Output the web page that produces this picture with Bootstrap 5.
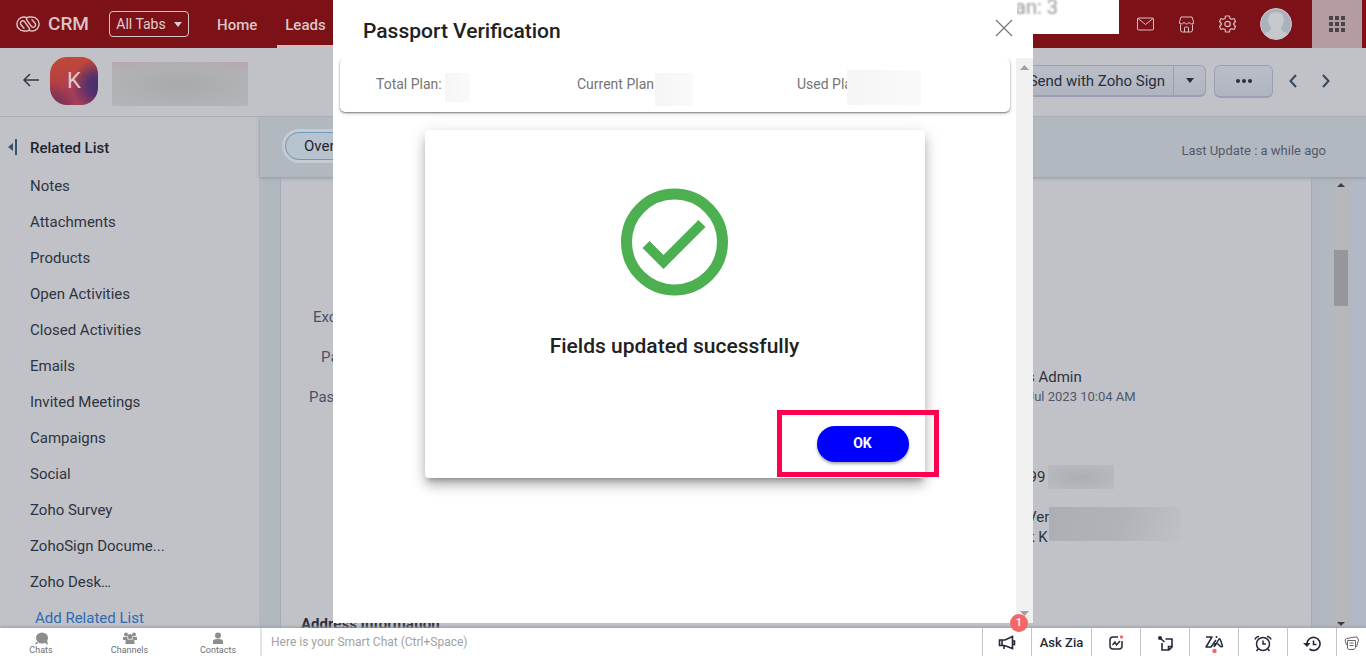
<!DOCTYPE html>
<html lang="en">
<head>
<meta charset="utf-8">
<meta name="viewport" content="width=device-width, initial-scale=1">
<title>Passport Verification - CRM</title>
<link href="https://cdn.jsdelivr.net/npm/bootstrap@5.3.0/dist/css/bootstrap.min.css" rel="stylesheet">
<script src="https://cdn.jsdelivr.net/npm/bootstrap@5.3.0/dist/js/bootstrap.bundle.min.js" defer></script>
<style>
body{font-family:Roboto,"Liberation Sans",sans-serif;font-size:15px;line-height:20px;color:#2e3440;background:#c1c2c8;height:100vh;overflow:hidden}
a{text-decoration:none;color:inherit}
svg{display:block;flex:none}
button{font:inherit}
.topbar{height:48px;background:#7c1117;color:#d9c5c8;flex:none}
.brand{font-size:19px;font-weight:500;gap:8px;padding-left:16px;width:109px}
.alltabs{width:80px;height:26px;border:1px solid #d9c5c8;border-radius:4px;background:none;color:#e0cdd0;font-size:14px;padding:0}
.mainnav{margin-left:28px;gap:20px}
.toplink{height:47px;line-height:48px;font-size:15px;font-weight:500}
.toplink.current{border-bottom:3px solid #d3bcc0;padding:0 8px}
.topicons{gap:24px;color:#d9bfc2;margin-right:20px}
.avatar{width:32px;height:32px}
.apps{width:50px;height:48px;background:#b59ca2;margin-right:4px}
.recordbar{height:69px;border-bottom:1px solid #abadb4;flex:none;padding:0 36px 2px 22px}
.face{width:48px;height:48px;border-radius:17px;margin:0 14px 0 10px;color:#e2c9cd;font-size:22px;background:radial-gradient(circle at 100% 60%,#44306a 0,#54306c 18%,transparent 48%),radial-gradient(circle at 0 110%,#5a2c5c 0,transparent 40%),radial-gradient(circle at 55% 85%,#a83e5c 0,transparent 50%),linear-gradient(#c14738,#ab3b4c)}
.mask-name{width:136px;height:44px;margin-top:6px;background:radial-gradient(ellipse,#a8a9ad 0,#afb0b4 50%,transparent 100%),linear-gradient(#b9a6ab,#b4b5b9 30%)}
.greybtn{height:32px;border:1px solid #9b9fb6;border-bottom-width:2px;background:linear-gradient(#b9bec8,#afb4c0);color:#27303c}
.greybtn.drop{width:32px}
.greybtn.more{width:59px;height:33px;border-radius:6px}
.pager{gap:25px;margin-left:16px}
.sidebar{width:260px;border-right:1px solid #b5bac2;padding:21px 0 0 30px;flex:none}
.sidehead{font-weight:500;color:#20252e;margin-bottom:18px}
.fold{left:8px;top:22px}
.sidelist{display:flex;flex-direction:column;gap:16px}
.addlist{color:#2e6bb4;padding-left:5px}
.work{background:#b2b8c0;min-width:0}
.tabsbar{height:60px;padding:0 40px 2px 22px;box-shadow:0 1px 4px #8f96a3;flex:none;z-index:1;background:#b2b8c0}
.pill{height:34px;border:3px solid #c6cbd2;border-radius:17px;width:200px}
.pill button{width:100%;height:28px;border:1px solid #6d9bbd;border-radius:14px;background:#b8c3d0;color:#1f252e;text-align:left;padding:0 18px}
.updated{font-size:13px;color:#535a6e;padding-top:10px}
.pane{min-height:0}
.sheet{background:#c1c2c8;margin-left:20px;border-left:1px solid #a3adb9;border-right:1px solid #a3adb9}
.labels{color:#4b5165;padding:130px 0 0 28px;gap:20px}
.values{width:284px;padding-top:190px}
.datetime{font-size:13px;color:#50576a}
.phone{margin-top:60px}
.street{margin-top:18px}
.cover-phone{width:66px;height:24px;margin:-2px 0 0 3px;background:radial-gradient(ellipse,#adaeb2,#b8b9bd 80%)}
.cover-street{width:132px;height:34px;background:linear-gradient(110deg,#adaeb3,#b2b3b8 55%,#c0c1c6)}
.scroller{width:54px;padding-left:20px;background:linear-gradient(90deg,#b1b7c0 0,#b2b8bf 18px,#b6b8bb 22px,#b6b7bb 36px,#b2b8c6 39px)}
.track{width:18px;padding:5px 0 0}
.thumb{width:14px;height:56px;background:#96979c;margin-top:63px}
.secthead{font-weight:700;color:#2a2f3a;left:20px;top:437px}
.chatbar{height:28px;background:#fff;flex:none;z-index:30;position:relative;box-shadow:0 -1px 3px #9b9ca1}
.contacts{width:262px;border-right:2px solid #e4e4e6;padding:4px 20px 0 19px;font-size:9px;line-height:11px;color:#707070}
.contacts a{width:44px}
.smart{border:0;outline:0;background:none;font-size:12px;padding:0 9px;min-width:0}
.smart::placeholder{color:#a2a2a2;opacity:1}
.tool{width:49px;border:0;border-left:1px solid #c4c5cc;background:none;color:#252a38;padding:2px 0 0}
.tool.zia-ask{width:60px;font-size:13px;font-weight:500}
.tool.last{width:30px;color:#666}
.count{width:18px;height:18px;right:338px;top:-14px;background:#f56767;color:#fff;font-size:11px;font-weight:500;line-height:18px;text-align:center;border-radius:50%;z-index:2}
.veil{inset:0 0 33px;z-index:20;pointer-events:none}
.dialogbox{width:700px;background:#fff;color:#212121;pointer-events:auto}
.dialoghead{height:58px;padding:0 20px 2px 30px;flex:none}
.dialoghead h1{font-size:21px;line-height:24px;font-weight:500;margin:6px 0 0}
.closer{border:0;background:none;padding:0;color:#777}
.plans{margin:0 6px 0 7px;height:54px;border-radius:5px;box-shadow:0 1px 2px #777,0 3px 5px #0001;clip-path:inset(0 -5px -8px);display:grid;grid-template-columns:201px 220px 1fr;padding:0 0 2px 36px;color:#757575;font-size:14px}
.plans>div{position:relative;display:flex;align-items:center}
.plans i{position:absolute;background:linear-gradient(90deg,#f5f5f5,#fafafa)}
.cover-total{left:69px;top:15px;width:25px;height:29px}
.cover-current{left:78px;top:15px;width:38px;height:33px}
.cover-used{left:50px;top:12px;width:74px;height:35px}
.rail{width:17px;background:#f0f0f0;color:#a0a0a0;padding:7px 4px}
.done{width:500px;height:348px;margin:18px auto 0;border-radius:4px;box-shadow:0 5px 5px -3px #0004,0 8px 12px #0003,0 3px 18px #0002;padding-top:58px}
.done h2{font-size:21px;line-height:24px;font-weight:500;margin:38px 0 0}
.okbtn{display:block;width:92px;height:36px;border:0;border-radius:18px;background:#00f;color:#fff;font-size:14px;font-weight:700;box-shadow:0 2px 3px #0005;padding:0 0 2px}
.okwrap{margin:68px 16px 0 0}
.marker{inset:-16px -30px -15px -40px;border:5px solid #ff0050;pointer-events:none}
.scrap{left:684px;top:0;width:102px;height:34px;background:#fff;color:#999;font-size:20px;line-height:14px;overflow:hidden}
.scrap span{filter:blur(1px);display:block;margin-left:-2px}
</style>
</head>
<body class="d-flex flex-column position-relative">
<header class="topbar d-flex align-items-center">
  <a href="#" class="brand d-flex align-items-center"><svg width="24" height="16" viewBox="0 0 24 16" fill="none" stroke="currentColor" stroke-width="1.400" stroke-linecap="round"><path id="loop" d="M11 1.700A7 7 0 1 0 8 15h3q3.500-.5 2.200-3L8.500 5.500Q7 4 5.300 5.300 3.800 7 5 8.800L8 12.300"/><use href="#loop" transform="rotate(180 12 8)"/></svg>CRM</a>
  <button class="alltabs d-flex align-items-center justify-content-center gap-2">All Tabs <svg width="8" height="5"><path d="M0 0h8L4 5z" fill="currentColor"/></svg></button>
  <nav class="mainnav d-flex"><a href="#" class="toplink">Home</a><a href="#" class="toplink current">Leads</a></nav>
  <div class="topicons ms-auto d-flex align-items-center">
    <svg width="17" height="14" viewBox="0 0 17 14" fill="none" stroke="currentColor"><rect x=".5" y="1" width="16" height="12" rx="1"/><path d="M1 1.500l7.500 6 7.500-6"/></svg>
    <svg width="17" height="17" viewBox="0 0 17 17" fill="none" stroke="currentColor"><path d="M3 1h11l1.500 4.500q.5 2.500-1.500 3M3 1L1.500 5.500Q1 8 3 8.500M2.500 9v5q0 2 2 2h8q2 0 2-2V9M6.500 16v-4q0-1 1-1h2q1 0 1 1v4M1.500 6c0 2.500 4.500 2.500 4.500 0 0 2.500 5 2.500 5 0 0 2.500 4.500 2.500 4.500 0"/></svg>
    <svg width="17" height="18" viewBox="0 0 17 18" fill="none" stroke="currentColor" stroke-width="1.200" stroke-linejoin="round"><path d="M6.500 1h4l.5 2.500 1.500.8 2.500-.8 1.500 3-1.800 2v1l1.800 2-1.500 3-2.500-.8-1.500.8-.5 2.500h-4L6 14.500l-1.500-.8-2.500.8-1.500-3 1.800-2v-1l-1.800-2 1.500-3 2.500.8L6 3.500z"/><circle cx="8.500" cy="9" r="2.700"/></svg>
    <svg class="avatar" viewBox="0 0 32 32"><defs><clipPath id="disc"><circle cx="16" cy="16" r="15"/></clipPath></defs><circle cx="16" cy="16" r="15.500" fill="#aab2bc" stroke="#c9c9cf"/><path clip-path="url(#disc)" d="M16 4c10 0 9 12 5 16 0 4 6 4 9 7v5H2v-5c3-3 9-3 9-7C7 16 6 4 16 4z" fill="#c6c8ce"/></svg>
  </div>
  <button class="apps border-0 d-flex align-items-center justify-content-center" aria-label="Apps"><svg width="16" height="16" fill="#484448"><path d="M0 0h4v4H0zM6 0h4v4H6zM12 0h4v4h-4zM0 6h4v4H0zM6 6h4v4H6zM12 6h4v4h-4zM0 12h4v4H0zM6 12h4v4H6zM12 12h4v4h-4z"/></svg></button>
</header>
<section class="recordbar d-flex align-items-center">
  <svg width="18" height="14" viewBox="0 0 18 14" fill="none" stroke="#303847" stroke-width="1.500"><path d="M17 6H2M8 0L2 6l6 6"/></svg>
  <div class="face d-flex align-items-center justify-content-center">K</div>
  <div class="mask-name"></div>
  <div class="ms-auto d-flex align-items-center">
    <div class="d-flex"><button class="greybtn rounded-start px-2">Send with Zoho Sign</button><button class="greybtn drop rounded-end border-start-0 d-flex align-items-center justify-content-center" aria-label="More senders"><svg width="8" height="5"><path d="M0 0h8L4 5z" fill="currentColor"/></svg></button></div>
    <button class="greybtn more ms-2 d-flex align-items-center justify-content-center" aria-label="More"><svg width="16" height="4" fill="currentColor"><circle cx="2" cy="2" r="2"/><circle cx="8" cy="2" r="2"/><circle cx="14" cy="2" r="2"/></svg></button>
    <div class="pager d-flex"><svg width="8" height="14" fill="none" stroke="#34495c" stroke-width="2"><path d="M7 1L1.500 7 7 13"/></svg><svg width="8" height="14" fill="none" stroke="#34495c" stroke-width="2"><path d="M1 1l5.500 6L1 13"/></svg></div>
  </div>
</section>
<main class="d-flex flex-grow-1 overflow-hidden">
  <aside class="sidebar position-relative">
    <svg class="fold position-absolute" width="10" height="16"><path d="M0 8l5-4v8z" fill="#34556a"/><path d="M8 0v16" stroke="#34556a" stroke-width="2"/></svg>
    <div class="sidehead">Related List</div>
    <nav class="sidelist"><a href="#">Notes</a><a href="#">Attachments</a><a href="#">Products</a><a href="#">Open Activities</a><a href="#">Closed Activities</a><a href="#">Emails</a><a href="#">Invited Meetings</a><a href="#">Campaigns</a><a href="#">Social</a><a href="#">Zoho Survey</a><a href="#">ZohoSign Docume...</a><a href="#">Zoho Desk…</a><a href="#" class="addlist">Add Related List</a></nav>
  </aside>
  <section class="work flex-grow-1 d-flex flex-column">
    <div class="tabsbar d-flex align-items-center"><div class="pill"><button>Overview</button></div><span class="updated ms-auto">Last Update : a while ago</span></div>
    <div class="pane d-flex flex-grow-1">
      <div class="sheet flex-grow-1 d-flex justify-content-between position-relative overflow-hidden">
        <div class="labels d-flex flex-column"><span class="ps-1">Exc</span><span class="ps-2 ms-1">Pa</span><span>Pass</span></div>
        <b class="secthead position-absolute">Address Information</b>
        <div class="values">
          <div>s Admin</div><div class="datetime">Jul 2023 10:04 AM</div>
          <div class="phone d-flex">&#8202;99<div class="cover-phone"></div></div>
          <div class="street d-flex"><div>Ver<br>k K</div><div class="cover-street"></div></div>
        </div>
      </div>
      <div class="scroller"><div class="track d-flex flex-column align-items-center h-100"><svg width="8" height="5"><path d="M0 5l4-4 4 4z" fill="#3c3f45"/></svg><div class="thumb"></div><svg class="mt-auto" width="8" height="6"><path d="M0 0l4 4 4-4z" fill="#3c3f45"/></svg></div></div>
    </div>
  </section>
</main>
<div class="veil position-absolute d-flex justify-content-center">
  <div class="dialogbox position-relative d-flex flex-column" role="dialog" aria-label="Passport Verification">
    <div class="dialoghead d-flex align-items-center justify-content-between"><h1>Passport Verification</h1><button class="closer" aria-label="Close"><svg width="18" height="18" stroke="currentColor" stroke-width="1.200"><path d="M1 1l16 16M17 1L1 17"/></svg></button></div>
    <div class="d-flex flex-grow-1">
      <div class="flex-grow-1">
        <div class="plans"><div>Total Plan:<i class="cover-total"></i></div><div>Current Plan<i class="cover-current"></i></div><div>Used Plan<i class="cover-used"></i></div></div>
        <div class="done bg-white text-center">
          <svg class="mx-auto" width="108" height="108" viewBox="0 0 108 108"><circle cx="53.500" cy="54" r="48" fill="none" stroke="#4caf50" stroke-width="11"/><path d="M21.500 60l7-7 14 14 35-35 7 7-42 42z" fill="#4caf50"/></svg>
          <h2>Fields updated sucessfully</h2>
          <div class="okwrap d-flex justify-content-end"><div class="position-relative"><button class="okbtn">OK</button><div class="marker position-absolute"></div></div></div>
        </div>
      </div>
      <div class="rail d-flex flex-column justify-content-between"><svg width="9" height="5"><path d="M0 5l4.500-5L9 5z" fill="currentColor"/></svg><svg width="9" height="5"><path d="M0 0l4.500 5L9 0z" fill="currentColor"/></svg></div>
    </div>
    <div class="scrap position-absolute"><span>an: 3</span></div>
  </div>
</div>
<footer class="chatbar d-flex">
  <nav class="contacts d-flex justify-content-between text-center">
    <a href="#"><svg class="mx-auto" width="14" height="13" fill="#8d8d8d"><ellipse cx="8" cy="6" rx="6" ry="5.500"/><path d="M1 3c-2 4 0 7 4 8l-4 1.500L2 10C0 8 0 5 1 3zM10 10l4 3-1-5z"/></svg>Chats</a>
    <a href="#"><svg class="mx-auto" width="14" height="13" fill="#8d8d8d"><circle cx="3" cy="2.500" r="2"/><circle cx="11" cy="2.500" r="2"/><circle cx="7" cy="4.500" r="2.500"/><path d="M0 8V5h4l1 3zM14 8V5h-4L9 8zM2.500 12V9q0-1.500 2-1.500h5q2 0 2 1.500v3z"/></svg>Channels</a>
    <a href="#"><svg class="mx-auto" width="12" height="13" fill="#8d8d8d"><circle cx="6" cy="3.500" r="3"/><path d="M1 12V9q0-2 5-2t5 2v3z"/></svg>Contacts</a>
  </nav>
  <input class="smart flex-grow-1" aria-label="Smart Chat" placeholder="Here is your Smart Chat (Ctrl+Space)">
  <span class="count position-absolute">1</span>
  <button class="tool d-flex align-items-center justify-content-center" aria-label="Announcements"><svg width="18" height="16" viewBox="0 0 18 16" fill="none" stroke="currentColor" stroke-width="1.600"><path d="M1.500 5v5.500h5l8 3v-12L7 5zM4 5v5.500M6 11v3M14.500 6h2v3.500h-2"/></svg></button>
  <button class="tool zia-ask">Ask Zia</button>
  <button class="tool d-flex align-items-center justify-content-center" aria-label="Insights"><svg width="16" height="16" viewBox="0 0 16 16" fill="none" stroke="currentColor" stroke-width="1.500"><path d="M10 2H5Q2 2 2 5v6q0 3 3 3h6q3 0 3-3V6M4.500 10L7 7l1.500 3L12 6"/><circle cx="13.500" cy="2" r="1.700" fill="#f56767" stroke="none"/></svg></button>
  <button class="tool d-flex align-items-center justify-content-center" aria-label="Notes"><svg width="17" height="17" viewBox="0 0 17 17" fill="none" stroke="currentColor" stroke-width="1.600"><path d="M8.500 4H15v8l-3 3H5V8M15 11.500h-3.500V15M3 3l4.500 4"/><circle cx="3" cy="3" r="2" fill="currentColor" stroke="none"/></svg></button>
  <button class="tool d-flex align-items-center justify-content-center" aria-label="Zia"><svg width="20" height="20" viewBox="0 0 20 20" fill="none" stroke="currentColor" stroke-width="1.500" stroke-linejoin="round"><path d="M2 4h6L2 14h5l5-7M10 14l1.500-4M11 13l4-7q1-.5 1.500 1l2 6q0 1-2 .5l-3-3"/><circle cx="12.500" cy="4" r="1" fill="currentColor" stroke="none"/><circle cx="10.500" cy="18" r="2.200" fill="#f56767" stroke="none"/></svg></button>
  <button class="tool d-flex align-items-center justify-content-center" aria-label="Reminders"><svg width="18" height="17" viewBox="0 0 18 17" fill="none" stroke="currentColor" stroke-width="1.500"><circle cx="9" cy="9" r="6.500"/><path d="M9 5.500V9h3M1 4.500Q2 1.500 5 1.500M17 4.500Q16 1.500 13 1.500M4 14l-1.500 2M14 14l1.500 2"/></svg></button>
  <button class="tool d-flex align-items-center justify-content-center" aria-label="History"><svg width="18" height="17" viewBox="0 0 18 17" fill="none" stroke="currentColor" stroke-width="1.600"><path d="M4 9a6.500 6.500 0 1 1 2.500 5M10.500 5.500V9.500h3"/><path d="M0 8h7.500L4 12z" fill="currentColor" stroke="none"/></svg></button>
  <button class="tool last d-flex align-items-center justify-content-center" aria-label="Recent items"><svg width="15" height="15" viewBox="0 0 15 15" fill="none" stroke="currentColor"><path d="M2.500 9L1 4l1.500-1.500L11 1h2l1.500 3-2 7M3.500 4.500h8v7l-1.500 2H5l-1.500-1zM5.500 7h4M5.500 9.500h4"/></svg></button>
</footer>
</body>
</html>
